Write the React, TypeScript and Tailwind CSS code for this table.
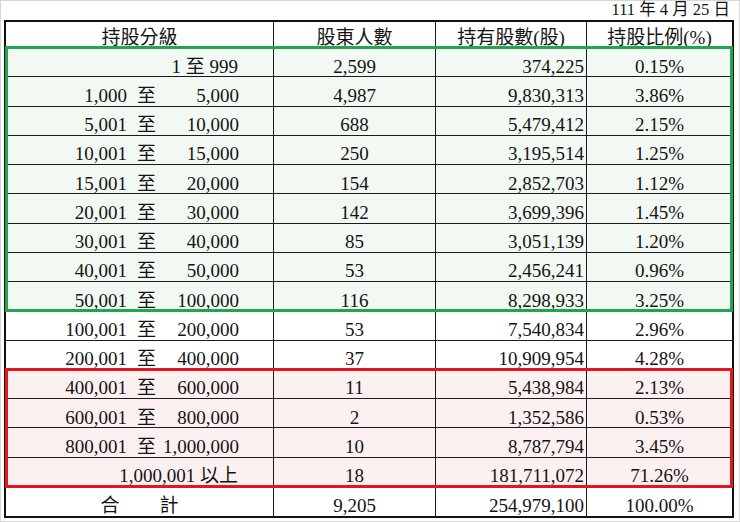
import React from "react";

type Row = {
  lo?: string;
  hi?: string;
  label?: string;
  holders: string;
  shares: string;
  pct: string;
};

const GREEN: Row[] = [
  { label: "1 至 999", holders: "2,599", shares: "374,225", pct: "0.15%" },
  { lo: "1,000", hi: "5,000", holders: "4,987", shares: "9,830,313", pct: "3.86%" },
  { lo: "5,001", hi: "10,000", holders: "688", shares: "5,479,412", pct: "2.15%" },
  { lo: "10,001", hi: "15,000", holders: "250", shares: "3,195,514", pct: "1.25%" },
  { lo: "15,001", hi: "20,000", holders: "154", shares: "2,852,703", pct: "1.12%" },
  { lo: "20,001", hi: "30,000", holders: "142", shares: "3,699,396", pct: "1.45%" },
  { lo: "30,001", hi: "40,000", holders: "85", shares: "3,051,139", pct: "1.20%" },
  { lo: "40,001", hi: "50,000", holders: "53", shares: "2,456,241", pct: "0.96%" },
  { lo: "50,001", hi: "100,000", holders: "116", shares: "8,298,933", pct: "3.25%" },
];

const PLAIN: Row[] = [
  { lo: "100,001", hi: "200,000", holders: "53", shares: "7,540,834", pct: "2.96%" },
  { lo: "200,001", hi: "400,000", holders: "37", shares: "10,909,954", pct: "4.28%" },
];

const RED: Row[] = [
  { lo: "400,001", hi: "600,000", holders: "11", shares: "5,438,984", pct: "2.13%" },
  { lo: "600,001", hi: "800,000", holders: "2", shares: "1,352,586", pct: "0.53%" },
  { lo: "800,001", hi: "1,000,000", holders: "10", shares: "8,787,794", pct: "3.45%" },
  { label: "1,000,001 以上", holders: "18", shares: "181,711,072", pct: "71.26%" },
];

function RangeCell({ row }: { row: Row }) {
  if (row.label) {
    return (
      <div className="flex w-[268px] items-center justify-end border-r border-[#1c1c1c] pr-[35px] pt-[8px]">
        {row.label}
      </div>
    );
  }
  return (
    <div className="flex w-[268px] items-center justify-end border-r border-[#1c1c1c] pr-[34px] pt-[8px]">
      <span className="mr-[10px] w-[72px] text-right">{row.lo}</span>
      <span className="mr-[7px] w-[19px]">至</span>
      <span className="w-[76px] text-right">{row.hi}</span>
    </div>
  );
}

function DataRow({ row }: { row: Row }) {
  return (
    <div className="flex h-[29.25px] border-b border-[#1c1c1c]">
      <RangeCell row={row} />
      <div className="flex w-[162px] items-center justify-center border-r border-[#1c1c1c] pt-[8px]">
        {row.holders}
      </div>
      <div className="flex w-[151px] items-center justify-end border-r border-[#1c1c1c] pr-[2px] pt-[8px]">
        {row.shares}
      </div>
      <div className="flex flex-1 items-center justify-center pt-[8px]">{row.pct}</div>
    </div>
  );
}

export default function App() {
  return (
    <div
      className="h-[522px] w-[740px] border border-[#d6d6d6] bg-white text-[#141414]"
      style={{ fontFamily: '"Liberation Serif", "Noto Sans CJK TC", serif' }}
    >
      <div className="flex h-[19px] items-center justify-end pr-[9px] text-[16.5px]">
        111 年 4 月 25 日
      </div>

      <div className="ml-[3px] w-[730px] border-2 border-[#111] text-[19px] leading-none">
        {/* header */}
        <div className="flex h-[26px] border-b border-[#1c1c1c]">
          <div className="flex w-[268px] items-center justify-center border-r border-[#1c1c1c] pt-[5px]">
            持股分級
          </div>
          <div className="flex w-[162px] items-center justify-center border-r border-[#1c1c1c] pt-[5px]">
            股東人數
          </div>
          <div className="flex w-[151px] items-center justify-center border-r border-[#1c1c1c] pt-[5px]">
            持有股數(股)
          </div>
          <div className="flex flex-1 items-center justify-center pt-[5px]">持股比例(%)</div>
        </div>

        <div className="relative bg-[#f1f9f2]">
          {GREEN.map((r, i) => (
            <DataRow key={i} row={r} />
          ))}
          <div className="pointer-events-none absolute -bottom-[1px] -left-[1px] -right-[1px] -top-[2px] border-[3px] border-[#1fa64f]" />
        </div>

        {PLAIN.map((r, i) => (
          <DataRow key={i} row={r} />
        ))}

        <div className="relative bg-[#fdf0f0]">
          {RED.map((r, i) => (
            <DataRow key={i} row={r} />
          ))}
          <div className="pointer-events-none absolute -bottom-[1px] -left-[1px] -right-[1px] -top-[2px] border-[3px] border-[#e8141b]" />
        </div>

        {/* total */}
        <div className="flex h-[29.25px]">
          <div className="flex w-[268px] items-center justify-center gap-[40px] border-r border-[#1c1c1c] pt-[8px]">
            <span>合</span>
            <span>計</span>
          </div>
          <div className="flex w-[162px] items-center justify-center border-r border-[#1c1c1c] pt-[8px]">
            9,205
          </div>
          <div className="flex w-[151px] items-center justify-end border-r border-[#1c1c1c] pr-[2px] pt-[8px]">
            254,979,100
          </div>
          <div className="flex flex-1 items-center justify-center pt-[8px]">100.00%</div>
        </div>
      </div>
    </div>
  );
}
